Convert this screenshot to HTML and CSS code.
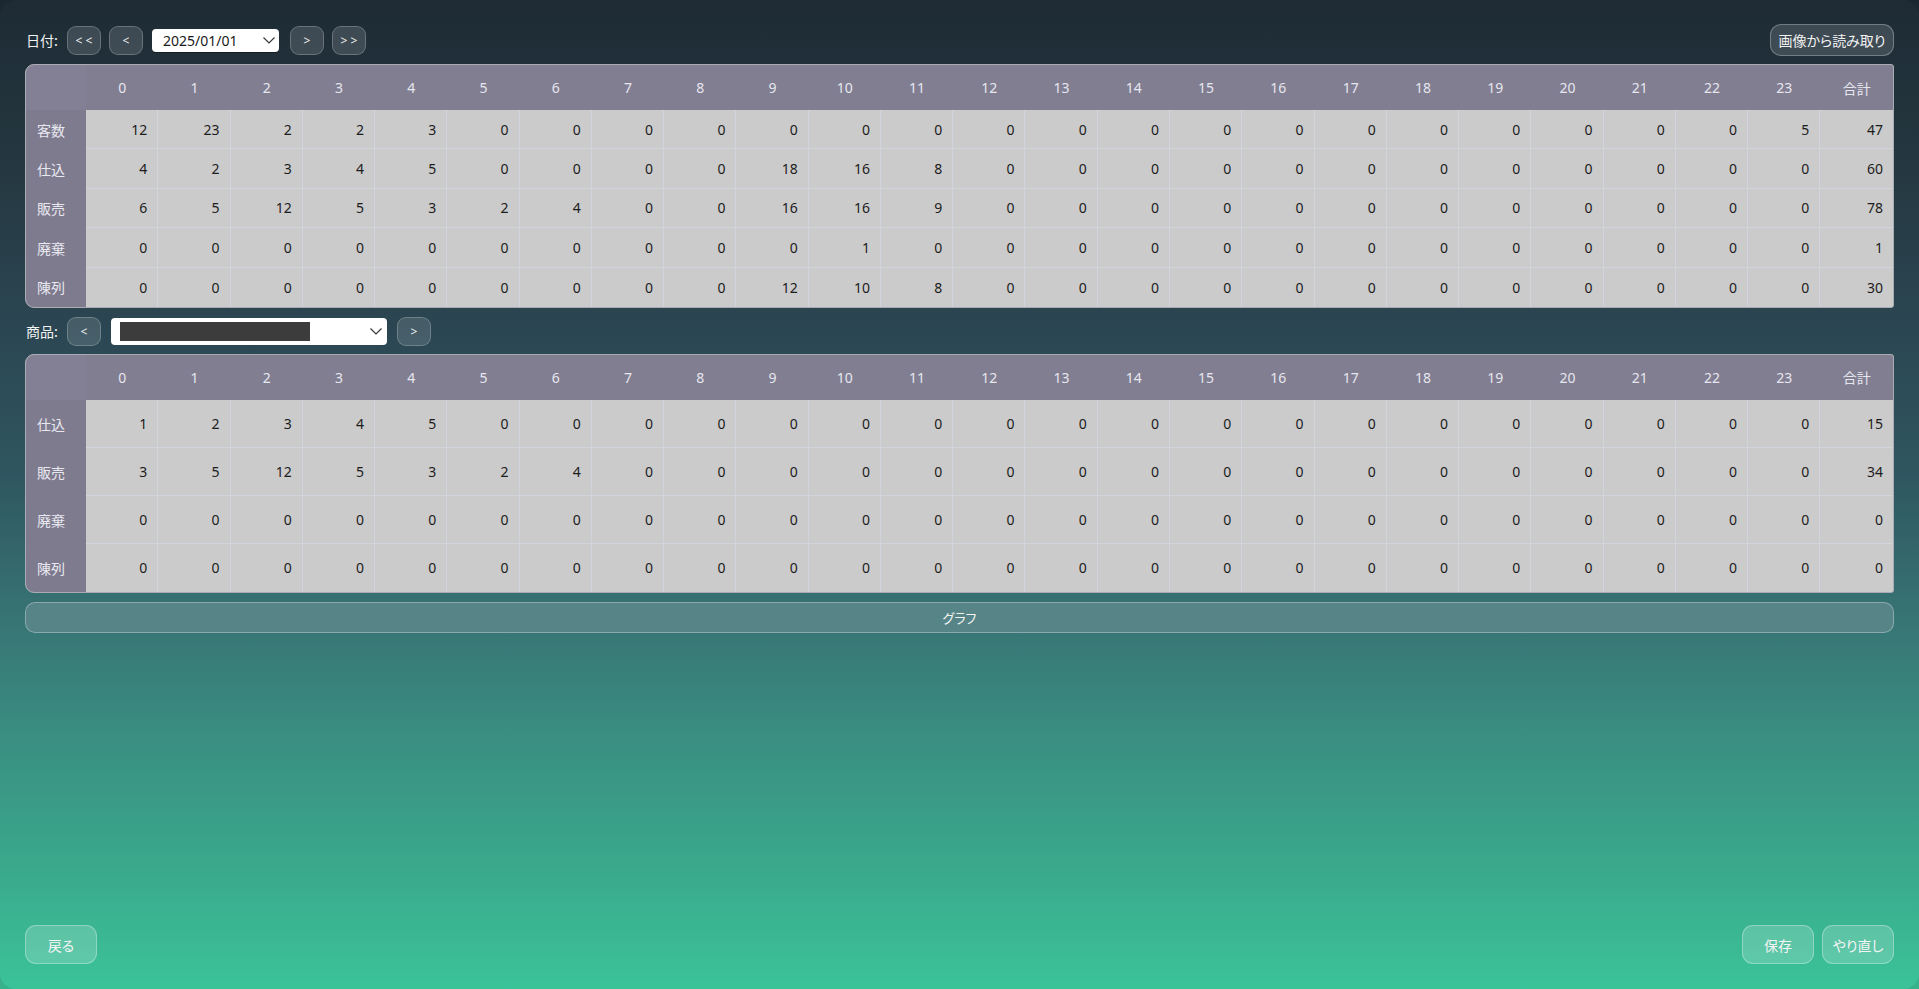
FILE: index.html
```html
<!DOCTYPE html>
<html lang="ja">
<head>
<meta charset="utf-8">
<title>日別データ</title>
<link rel="stylesheet" href="styles.css">
</head>
<body>
<div class="window">
  <div class="toolbar toolbar-date">
    <span class="label">日付:</span>
    <button class="nav-btn">&lt; &lt;</button>
    <button class="nav-btn nav-gap">&lt;</button>
    <div class="select select-date">
      <span class="select-text">2025/01/01</span>
      <svg class="chevron" width="12" height="7" viewBox="0 0 12 7"><path d="M0.5 0.5 L6 6 L11.5 0.5" fill="none" stroke="#333" stroke-width="1.1"/></svg>
    </div>
    <button class="nav-btn nav-gap2">&gt;</button>
    <button class="nav-btn">&gt; &gt;</button>
    <div class="flex-spacer"></div>
    <button class="pill-btn">画像から読み取り</button>
  </div>

  <div class="grid-wrap">
    <table class="grid grid-compact">
      <colgroup><col class="col-label"><col span="25"></colgroup>
      <thead>
        <tr><th class="corner"></th><th>0</th><th>1</th><th>2</th><th>3</th><th>4</th><th>5</th><th>6</th><th>7</th><th>8</th><th>9</th><th>10</th><th>11</th><th>12</th><th>13</th><th>14</th><th>15</th><th>16</th><th>17</th><th>18</th><th>19</th><th>20</th><th>21</th><th>22</th><th>23</th><th class="jp">合計</th></tr>
      </thead>
      <tbody>
        <tr><th class="row-label">客数</th><td>12</td><td>23</td><td>2</td><td>2</td><td>3</td><td>0</td><td>0</td><td>0</td><td>0</td><td>0</td><td>0</td><td>0</td><td>0</td><td>0</td><td>0</td><td>0</td><td>0</td><td>0</td><td>0</td><td>0</td><td>0</td><td>0</td><td>0</td><td>5</td><td>47</td></tr>
        <tr><th class="row-label">仕込</th><td>4</td><td>2</td><td>3</td><td>4</td><td>5</td><td>0</td><td>0</td><td>0</td><td>0</td><td>18</td><td>16</td><td>8</td><td>0</td><td>0</td><td>0</td><td>0</td><td>0</td><td>0</td><td>0</td><td>0</td><td>0</td><td>0</td><td>0</td><td>0</td><td>60</td></tr>
        <tr><th class="row-label">販売</th><td>6</td><td>5</td><td>12</td><td>5</td><td>3</td><td>2</td><td>4</td><td>0</td><td>0</td><td>16</td><td>16</td><td>9</td><td>0</td><td>0</td><td>0</td><td>0</td><td>0</td><td>0</td><td>0</td><td>0</td><td>0</td><td>0</td><td>0</td><td>0</td><td>78</td></tr>
        <tr><th class="row-label">廃棄</th><td>0</td><td>0</td><td>0</td><td>0</td><td>0</td><td>0</td><td>0</td><td>0</td><td>0</td><td>0</td><td>1</td><td>0</td><td>0</td><td>0</td><td>0</td><td>0</td><td>0</td><td>0</td><td>0</td><td>0</td><td>0</td><td>0</td><td>0</td><td>0</td><td>1</td></tr>
        <tr><th class="row-label">陳列</th><td>0</td><td>0</td><td>0</td><td>0</td><td>0</td><td>0</td><td>0</td><td>0</td><td>0</td><td>12</td><td>10</td><td>8</td><td>0</td><td>0</td><td>0</td><td>0</td><td>0</td><td>0</td><td>0</td><td>0</td><td>0</td><td>0</td><td>0</td><td>0</td><td>30</td></tr>
      </tbody>
    </table>
  </div>

  <div class="toolbar toolbar-product">
    <span class="label">商品:</span>
    <button class="nav-btn nav-btn-lite">&lt;</button>
    <div class="select select-product">
      <span class="redacted"></span>
      <svg class="chevron" width="12" height="7" viewBox="0 0 12 7"><path d="M0.5 0.5 L6 6 L11.5 0.5" fill="none" stroke="#333" stroke-width="1.1"/></svg>
    </div>
    <button class="nav-btn nav-btn-lite">&gt;</button>
  </div>

  <div class="grid-wrap grid-wrap-second">
    <table class="grid grid-tall">
      <colgroup><col class="col-label"><col span="25"></colgroup>
      <thead>
        <tr><th class="corner"></th><th>0</th><th>1</th><th>2</th><th>3</th><th>4</th><th>5</th><th>6</th><th>7</th><th>8</th><th>9</th><th>10</th><th>11</th><th>12</th><th>13</th><th>14</th><th>15</th><th>16</th><th>17</th><th>18</th><th>19</th><th>20</th><th>21</th><th>22</th><th>23</th><th class="jp">合計</th></tr>
      </thead>
      <tbody>
        <tr><th class="row-label">仕込</th><td>1</td><td>2</td><td>3</td><td>4</td><td>5</td><td>0</td><td>0</td><td>0</td><td>0</td><td>0</td><td>0</td><td>0</td><td>0</td><td>0</td><td>0</td><td>0</td><td>0</td><td>0</td><td>0</td><td>0</td><td>0</td><td>0</td><td>0</td><td>0</td><td>15</td></tr>
        <tr><th class="row-label">販売</th><td>3</td><td>5</td><td>12</td><td>5</td><td>3</td><td>2</td><td>4</td><td>0</td><td>0</td><td>0</td><td>0</td><td>0</td><td>0</td><td>0</td><td>0</td><td>0</td><td>0</td><td>0</td><td>0</td><td>0</td><td>0</td><td>0</td><td>0</td><td>0</td><td>34</td></tr>
        <tr><th class="row-label">廃棄</th><td>0</td><td>0</td><td>0</td><td>0</td><td>0</td><td>0</td><td>0</td><td>0</td><td>0</td><td>0</td><td>0</td><td>0</td><td>0</td><td>0</td><td>0</td><td>0</td><td>0</td><td>0</td><td>0</td><td>0</td><td>0</td><td>0</td><td>0</td><td>0</td><td>0</td></tr>
        <tr><th class="row-label">陳列</th><td>0</td><td>0</td><td>0</td><td>0</td><td>0</td><td>0</td><td>0</td><td>0</td><td>0</td><td>0</td><td>0</td><td>0</td><td>0</td><td>0</td><td>0</td><td>0</td><td>0</td><td>0</td><td>0</td><td>0</td><td>0</td><td>0</td><td>0</td><td>0</td><td>0</td></tr>
      </tbody>
    </table>
  </div>

  <button class="wide-btn">グラフ</button>

  <div class="flex-spacer"></div>

  <div class="footer">
    <button class="foot-btn">戻る</button>
    <div class="flex-spacer"></div>
    <button class="foot-btn">保存</button>
    <button class="foot-btn">やり直し</button>
  </div>
</div>
</body>
</html>
```

FILE: styles.css
```css
* { box-sizing: border-box; }

html, body {
  margin: 0;
  height: 100%;
}

html {
  background: linear-gradient(to bottom, #1b2730 0%, #294350 35%, #356b6b 62%, #379b82 85%, #37b38c 100%);
}

body {
  font-family: "Segoe UI", "Noto Sans", "Noto Sans CJK JP", sans-serif;
  font-size: 14px;
  color: #f0f0f0;
  overflow: hidden;
}

.window {
  height: 989px;
  display: flex;
  flex-direction: column;
  padding: 24px 25px 25px 25px;
  border-radius: 16px;
  background: linear-gradient(to bottom, #1e2b35 0%, #24363f 15%, #2b4652 33%, #2f5660 48%, #377373 62%, #3a8f82 75%, #3aa98c 88%, #3bc398 100%);
}

.jp,
.label,
.pill-btn,
.row-label,
.wide-btn,
.foot-btn {
  font-family: "Noto Sans CJK JP", sans-serif;
  font-feature-settings: "palt" 1;
}

.toolbar {
  display: flex;
  align-items: center;
  flex: none;
}

.toolbar-date {
  height: 32px;
}

.toolbar-product {
  height: 31px;
  margin-top: 8px;
}

.label {
  width: 42px;
  font-size: 14px;
  color: #f2f2f2;
  padding-left: 1px;
}

.nav-btn {
  width: 34px;
  height: 29px;
  border-radius: 9px;
  border: 1px solid rgba(255, 255, 255, 0.22);
  background: rgba(255, 255, 255, 0.14);
  color: #f0f0f0;
  font-family: "Noto Sans", sans-serif;
  font-size: 12px;
  padding: 0;
  margin-right: 8px;
  display: flex;
  align-items: center;
  justify-content: center;
}

.nav-gap { margin-right: 9px; }
.nav-gap2 { margin-left: 1px; }

.nav-btn-lite {
  background: rgba(255, 255, 255, 0.13);
  margin-right: 10px;
}

.select {
  background: #ffffff;
  border-radius: 4px;
  display: flex;
  align-items: center;
  box-shadow: 0 1px 0 rgba(0, 0, 0, 0.35);
}

.select-date {
  width: 127px;
  height: 23px;
  margin-right: 10px;
  padding-left: 11px;
}

.select-text {
  color: #1a1a1a;
  font-size: 14px;
  font-family: "Segoe UI", "Noto Sans", sans-serif;
}

.select-date .chevron {
  margin-left: auto;
  margin-right: 4px;
}

.select-product {
  width: 276px;
  height: 27px;
  margin-right: 10px;
  padding-left: 9px;
  box-shadow: none;
}

.select-product .chevron {
  margin-left: auto;
  margin-right: 5px;
}

.redacted {
  width: 190px;
  height: 19px;
  background: #3c3c3c;
}

.flex-spacer { flex: 1; }

.pill-btn {
  height: 32px;
  width: 124px;
  border-radius: 11px;
  border: 1px solid rgba(255, 255, 255, 0.28);
  background: rgba(255, 255, 255, 0.14);
  color: #f2f2f2;
  font-size: 14px;
  padding: 0;
}

.grid-wrap {
  margin-top: 8px;
  border: 1px solid #a9adb3;
  border-radius: 9px 3px 3px 9px;
  overflow: hidden;
  flex: none;
  background: #cbcbcb;
}

.grid-wrap-second { margin-top: 7px; }

.grid {
  width: 100%;
  table-layout: fixed;
  border-collapse: separate;
  border-spacing: 0;
}

.col-label { width: 60px; }

.grid thead th {
  background: #817e92;
  color: #e6e6ee;
  font-weight: normal;
  font-size: 14px;
  height: 45px;
  padding: 0;
  text-align: center;
}

.grid thead th.corner { background: #838095; }

.grid .row-label {
  background: #7f7b8f;
  color: #e8e8f0;
  font-weight: normal;
  text-align: left;
  padding: 0 0 0 11px;
  font-size: 14px;
}

.grid td {
  background: #cbcbcb;
  color: #1c1c1c;
  text-align: right;
  padding: 0 10px 0 0;
  border-right: 1px solid #d0d6dc;
  border-bottom: 1px solid #d0d6dc;
  font-size: 14px;
}

.grid td:last-child { border-right: none; }
.grid tbody tr:last-child td { border-bottom: none; }

.grid-compact tbody tr { height: 39.4px; }
.grid-tall tbody tr { height: 48px; }

.wide-btn {
  margin-top: 9px;
  height: 31px;
  width: 100%;
  border-radius: 10px;
  border: 1px solid rgba(255, 255, 255, 0.3);
  background: #578587;
  color: #f4f4f4;
  font-size: 13px;
  flex: none;
}

.footer {
  display: flex;
  align-items: center;
  flex: none;
  height: 39px;
}

.foot-btn {
  width: 72px;
  height: 39px;
  border-radius: 11px;
  border: 1px solid rgba(255, 255, 255, 0.3);
  background: rgba(255, 255, 255, 0.18);
  color: #f4f4f4;
  font-size: 14px;
  padding: 0;
  margin-left: 8px;
}

.foot-btn:first-child { margin-left: 0; }
```
